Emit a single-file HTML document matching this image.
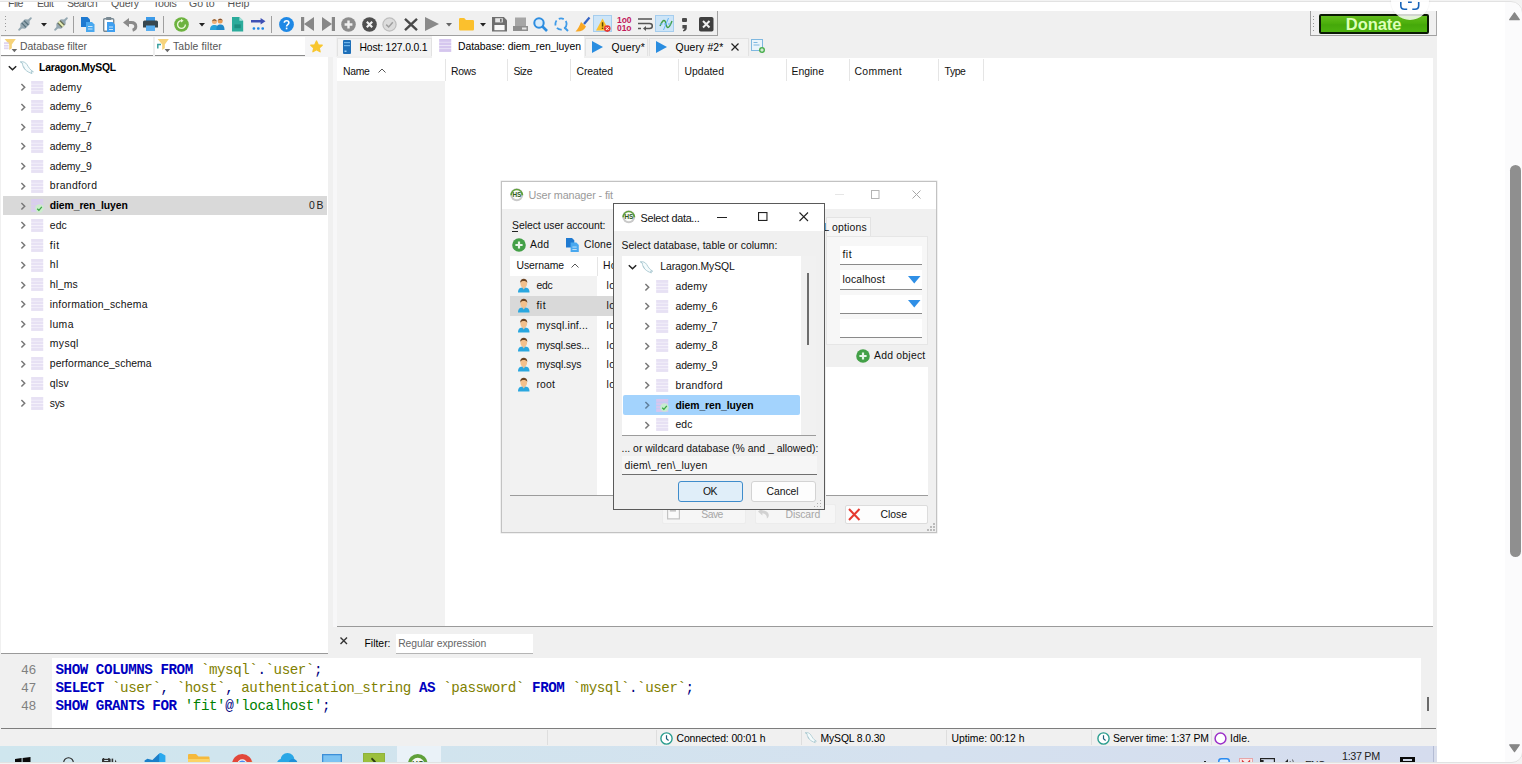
<!DOCTYPE html>
<html lang="en"><head><meta charset="utf-8"><title>HeidiSQL - User manager</title>
<style>
html,body{margin:0;padding:0;}
body{width:1522px;height:764px;overflow:hidden;background:#fff;position:relative;font-family:"Liberation Sans",sans-serif;font-size:11px;color:#000;}
.r{position:absolute;box-sizing:border-box;}
.t{position:absolute;white-space:pre;}
svg{overflow:visible;}
</style></head><body>
<div class="r " style="left:0.00px;top:0.00px;width:1436.50px;height:764.00px;background:#f0f0f0;"></div>
<div class="r " style="left:0.00px;top:0.00px;width:1436.50px;height:11.00px;background:#fff;"></div>
<div class="r" style="left:0;top:0;width:1436.5px;height:12.5px;overflow:hidden">
<span class="t" style="left:8.00px;top:-4.80px;font-size:10.6px;line-height:16px;letter-spacing:-0.520px;color:#555;">File</span>
<span class="t" style="left:37.00px;top:-4.80px;font-size:10.6px;line-height:16px;letter-spacing:-0.441px;color:#555;">Edit</span>
<span class="t" style="left:67.00px;top:-4.80px;font-size:10.6px;line-height:16px;letter-spacing:-0.598px;color:#555;">Search</span>
<span class="t" style="left:111.00px;top:-4.80px;font-size:10.6px;line-height:16px;letter-spacing:-0.173px;color:#555;">Query</span>
<span class="t" style="left:153.00px;top:-4.80px;font-size:10.6px;line-height:16px;letter-spacing:-0.249px;color:#555;">Tools</span>
<span class="t" style="left:189.00px;top:-4.80px;font-size:10.6px;line-height:16px;letter-spacing:-0.085px;color:#555;">Go to</span>
<span class="t" style="left:227.50px;top:-4.80px;font-size:10.6px;line-height:16px;letter-spacing:0.050px;color:#555;">Help</span>
</div>
<div class="r " style="left:1.00px;top:11.00px;width:716.50px;height:24.50px;background:#f0f0f0;border-right:1px solid #a0a0a0;border-bottom:1px solid #a0a0a0;"></div>
<div class="r " style="left:4.50px;top:15.50px;width:1.20px;height:1.20px;background:#9a9a9a;"></div>
<div class="r " style="left:4.50px;top:19.10px;width:1.20px;height:1.20px;background:#9a9a9a;"></div>
<div class="r " style="left:4.50px;top:22.70px;width:1.20px;height:1.20px;background:#9a9a9a;"></div>
<div class="r " style="left:4.50px;top:26.30px;width:1.20px;height:1.20px;background:#9a9a9a;"></div>
<div class="r " style="left:4.50px;top:29.90px;width:1.20px;height:1.20px;background:#9a9a9a;"></div>
<div class="r " style="left:1310.00px;top:11.00px;width:127.00px;height:24.80px;background:#f0f0f0;border-left:1px solid #a0a0a0;border-bottom:1px solid #a0a0a0;border-right:1px solid #a8a8a8;"></div>
<div class="r " style="left:1313.00px;top:15.50px;width:1.20px;height:1.20px;background:#9a9a9a;"></div>
<div class="r " style="left:1313.00px;top:19.10px;width:1.20px;height:1.20px;background:#9a9a9a;"></div>
<div class="r " style="left:1313.00px;top:22.70px;width:1.20px;height:1.20px;background:#9a9a9a;"></div>
<div class="r " style="left:1313.00px;top:26.30px;width:1.20px;height:1.20px;background:#9a9a9a;"></div>
<div class="r " style="left:1313.00px;top:29.90px;width:1.20px;height:1.20px;background:#9a9a9a;"></div>
<div class="r " style="left:1319.30px;top:13.80px;width:110.00px;height:20.70px;background:linear-gradient(#63bd1e 0%,#4caf0c 45%,#45a80a 55%,#4db30e 100%);border:2px solid #0a1a04;border-radius:2px;"></div>
<span class="t" style="left:1345.80px;top:15.20px;font-size:16.5px;line-height:18px;letter-spacing:-0.070px;font-weight:700;color:#dcffb8;">Donate</span>
<div class="r " style="left:1.00px;top:37.00px;width:152.00px;height:18.50px;background:#fff;border-bottom:1px solid #8a8a8a;"></div>
<div class="r " style="left:154.50px;top:37.00px;width:150.30px;height:18.50px;background:#fff;border-bottom:1px solid #8a8a8a;"></div>
<span class="t" style="left:20.00px;top:38.70px;font-size:10.4px;line-height:16px;letter-spacing:-0.004px;color:#555;">Database filter</span>
<span class="t" style="left:173.00px;top:38.70px;font-size:10.4px;line-height:16px;letter-spacing:0.133px;color:#555;">Table filter</span>
<div class="r " style="left:1.00px;top:56.50px;width:326.50px;height:597.00px;background:#fff;border-bottom:1px solid #9a9a9a;"></div>
<div class="r " style="left:332.50px;top:57.00px;width:4.50px;height:570.00px;background:#f7f7f8;"></div>
<svg class="r" style="left:8.00px;top:64.55px;" width="9" height="6" viewBox="0 0 9 6"><path d="M0.8 1.2 L4.5 4.8 L8.2 1.2" fill="none" stroke="#222" stroke-width="1.5"/></svg>
<svg class="r" style="left:20.40px;top:60.95px;" width="14" height="13" viewBox="0 0 14 13"><path d="M0.4 0.9 C3.2 0.2 5.6 1.4 7 3.6 C8.6 6.2 9.6 8.6 13.4 10.8 L11.2 10.6 L12 12.6 C9 11.4 7.2 10.6 5.2 8.6 C3.4 6.8 2.6 4.4 2.4 2.2 Z M2.4 2.2 L0.4 0.9 M3.6 5.4 C4 7 4.6 7.8 5.2 8.6" fill="#f4fbfc" stroke="#a6c6cf" stroke-width="0.9" stroke-linejoin="round"/></svg>
<span class="t" style="left:39.00px;top:59.95px;font-size:10.4px;line-height:16px;letter-spacing:-0.211px;font-weight:700;">Laragon.MySQL</span>
<svg class="r" style="left:20.00px;top:83.06px;" width="6" height="8.5" viewBox="0 0 6 8.5"><path d="M1.4 1 L4.7 4.25 L1.4 7.5" fill="none" stroke="#787878" stroke-width="1.5"/></svg>
<svg class="r" style="left:31.00px;top:80.71px;opacity:1;" width="12.4" height="13.4" viewBox="0 0 13 14.4"><rect x="0" y="0" width="13" height="3.1" fill="#e7e1f4"/><rect x="0" y="3.6" width="13" height="3.1" fill="#e7e1f4"/><rect x="0" y="7.2" width="13" height="3.1" fill="#e7e1f4"/><rect x="0" y="10.8" width="13" height="3.1" fill="#e7e1f4"/></svg>
<span class="t" style="left:49.80px;top:79.51px;font-size:10.4px;line-height:16px;letter-spacing:0.157px;color:#111;">ademy</span>
<svg class="r" style="left:20.00px;top:102.82px;" width="6" height="8.5" viewBox="0 0 6 8.5"><path d="M1.4 1 L4.7 4.25 L1.4 7.5" fill="none" stroke="#787878" stroke-width="1.5"/></svg>
<svg class="r" style="left:31.00px;top:100.47px;opacity:1;" width="12.4" height="13.4" viewBox="0 0 13 14.4"><rect x="0" y="0" width="13" height="3.1" fill="#e7e1f4"/><rect x="0" y="3.6" width="13" height="3.1" fill="#e7e1f4"/><rect x="0" y="7.2" width="13" height="3.1" fill="#e7e1f4"/><rect x="0" y="10.8" width="13" height="3.1" fill="#e7e1f4"/></svg>
<span class="t" style="left:49.80px;top:99.27px;font-size:10.4px;line-height:16px;letter-spacing:-0.112px;color:#111;">ademy_6</span>
<svg class="r" style="left:20.00px;top:122.58px;" width="6" height="8.5" viewBox="0 0 6 8.5"><path d="M1.4 1 L4.7 4.25 L1.4 7.5" fill="none" stroke="#787878" stroke-width="1.5"/></svg>
<svg class="r" style="left:31.00px;top:120.23px;opacity:1;" width="12.4" height="13.4" viewBox="0 0 13 14.4"><rect x="0" y="0" width="13" height="3.1" fill="#e7e1f4"/><rect x="0" y="3.6" width="13" height="3.1" fill="#e7e1f4"/><rect x="0" y="7.2" width="13" height="3.1" fill="#e7e1f4"/><rect x="0" y="10.8" width="13" height="3.1" fill="#e7e1f4"/></svg>
<span class="t" style="left:49.80px;top:119.03px;font-size:10.4px;line-height:16px;letter-spacing:-0.112px;color:#111;">ademy_7</span>
<svg class="r" style="left:20.00px;top:142.34px;" width="6" height="8.5" viewBox="0 0 6 8.5"><path d="M1.4 1 L4.7 4.25 L1.4 7.5" fill="none" stroke="#787878" stroke-width="1.5"/></svg>
<svg class="r" style="left:31.00px;top:139.99px;opacity:1;" width="12.4" height="13.4" viewBox="0 0 13 14.4"><rect x="0" y="0" width="13" height="3.1" fill="#e7e1f4"/><rect x="0" y="3.6" width="13" height="3.1" fill="#e7e1f4"/><rect x="0" y="7.2" width="13" height="3.1" fill="#e7e1f4"/><rect x="0" y="10.8" width="13" height="3.1" fill="#e7e1f4"/></svg>
<span class="t" style="left:49.80px;top:138.79px;font-size:10.4px;line-height:16px;letter-spacing:-0.112px;color:#111;">ademy_8</span>
<svg class="r" style="left:20.00px;top:162.10px;" width="6" height="8.5" viewBox="0 0 6 8.5"><path d="M1.4 1 L4.7 4.25 L1.4 7.5" fill="none" stroke="#787878" stroke-width="1.5"/></svg>
<svg class="r" style="left:31.00px;top:159.75px;opacity:1;" width="12.4" height="13.4" viewBox="0 0 13 14.4"><rect x="0" y="0" width="13" height="3.1" fill="#e7e1f4"/><rect x="0" y="3.6" width="13" height="3.1" fill="#e7e1f4"/><rect x="0" y="7.2" width="13" height="3.1" fill="#e7e1f4"/><rect x="0" y="10.8" width="13" height="3.1" fill="#e7e1f4"/></svg>
<span class="t" style="left:49.80px;top:158.55px;font-size:10.4px;line-height:16px;letter-spacing:-0.112px;color:#111;">ademy_9</span>
<svg class="r" style="left:20.00px;top:181.86px;" width="6" height="8.5" viewBox="0 0 6 8.5"><path d="M1.4 1 L4.7 4.25 L1.4 7.5" fill="none" stroke="#787878" stroke-width="1.5"/></svg>
<svg class="r" style="left:31.00px;top:179.51px;opacity:1;" width="12.4" height="13.4" viewBox="0 0 13 14.4"><rect x="0" y="0" width="13" height="3.1" fill="#e7e1f4"/><rect x="0" y="3.6" width="13" height="3.1" fill="#e7e1f4"/><rect x="0" y="7.2" width="13" height="3.1" fill="#e7e1f4"/><rect x="0" y="10.8" width="13" height="3.1" fill="#e7e1f4"/></svg>
<span class="t" style="left:49.80px;top:178.31px;font-size:10.4px;line-height:16px;letter-spacing:0.331px;color:#111;">brandford</span>
<div class="r " style="left:2.50px;top:195.67px;width:324.50px;height:19.60px;background:#d9d9d9;"></div>
<svg class="r" style="left:20.00px;top:201.62px;" width="6" height="8.5" viewBox="0 0 6 8.5"><path d="M1.4 1 L4.7 4.25 L1.4 7.5" fill="none" stroke="#787878" stroke-width="1.5"/></svg>
<svg class="r" style="left:31.00px;top:199.27px;opacity:1;" width="12.4" height="13.4" viewBox="0 0 13 14.4"><rect x="0" y="0" width="13" height="3.1" fill="#d9cdee"/><rect x="0" y="3.6" width="13" height="3.1" fill="#d9cdee"/><rect x="0" y="7.2" width="13" height="3.1" fill="#d9cdee"/><rect x="0" y="10.8" width="13" height="3.1" fill="#d9cdee"/></svg>
<svg class="r" style="left:35.00px;top:203.67px;" width="9" height="9" viewBox="0 0 9 9"><circle cx="4.5" cy="4.5" r="4.2" fill="#cdeccd"/><path d="M2.2 4.7 L3.9 6.3 L6.8 2.9" fill="none" stroke="#3aa845" stroke-width="1.3"/></svg>
<span class="t" style="left:49.80px;top:198.07px;font-size:10.4px;line-height:16px;letter-spacing:-0.085px;font-weight:700;">diem_ren_luyen</span>
<span class="t" style="left:309.00px;top:198.07px;font-size:10.4px;line-height:16px;letter-spacing:-0.537px;color:#222;">0 B</span>
<svg class="r" style="left:20.00px;top:221.38px;" width="6" height="8.5" viewBox="0 0 6 8.5"><path d="M1.4 1 L4.7 4.25 L1.4 7.5" fill="none" stroke="#787878" stroke-width="1.5"/></svg>
<svg class="r" style="left:31.00px;top:219.03px;opacity:1;" width="12.4" height="13.4" viewBox="0 0 13 14.4"><rect x="0" y="0" width="13" height="3.1" fill="#e7e1f4"/><rect x="0" y="3.6" width="13" height="3.1" fill="#e7e1f4"/><rect x="0" y="7.2" width="13" height="3.1" fill="#e7e1f4"/><rect x="0" y="10.8" width="13" height="3.1" fill="#e7e1f4"/></svg>
<span class="t" style="left:49.80px;top:217.83px;font-size:10.4px;line-height:16px;letter-spacing:0.077px;color:#111;">edc</span>
<svg class="r" style="left:20.00px;top:241.14px;" width="6" height="8.5" viewBox="0 0 6 8.5"><path d="M1.4 1 L4.7 4.25 L1.4 7.5" fill="none" stroke="#787878" stroke-width="1.5"/></svg>
<svg class="r" style="left:31.00px;top:238.79px;opacity:1;" width="12.4" height="13.4" viewBox="0 0 13 14.4"><rect x="0" y="0" width="13" height="3.1" fill="#e7e1f4"/><rect x="0" y="3.6" width="13" height="3.1" fill="#e7e1f4"/><rect x="0" y="7.2" width="13" height="3.1" fill="#e7e1f4"/><rect x="0" y="10.8" width="13" height="3.1" fill="#e7e1f4"/></svg>
<span class="t" style="left:49.80px;top:237.59px;font-size:10.4px;line-height:16px;letter-spacing:0.637px;color:#111;">fit</span>
<svg class="r" style="left:20.00px;top:260.90px;" width="6" height="8.5" viewBox="0 0 6 8.5"><path d="M1.4 1 L4.7 4.25 L1.4 7.5" fill="none" stroke="#787878" stroke-width="1.5"/></svg>
<svg class="r" style="left:31.00px;top:258.55px;opacity:1;" width="12.4" height="13.4" viewBox="0 0 13 14.4"><rect x="0" y="0" width="13" height="3.1" fill="#e7e1f4"/><rect x="0" y="3.6" width="13" height="3.1" fill="#e7e1f4"/><rect x="0" y="7.2" width="13" height="3.1" fill="#e7e1f4"/><rect x="0" y="10.8" width="13" height="3.1" fill="#e7e1f4"/></svg>
<span class="t" style="left:49.80px;top:257.35px;font-size:10.4px;line-height:16px;letter-spacing:0.453px;color:#111;">hl</span>
<svg class="r" style="left:20.00px;top:280.66px;" width="6" height="8.5" viewBox="0 0 6 8.5"><path d="M1.4 1 L4.7 4.25 L1.4 7.5" fill="none" stroke="#787878" stroke-width="1.5"/></svg>
<svg class="r" style="left:31.00px;top:278.31px;opacity:1;" width="12.4" height="13.4" viewBox="0 0 13 14.4"><rect x="0" y="0" width="13" height="3.1" fill="#e7e1f4"/><rect x="0" y="3.6" width="13" height="3.1" fill="#e7e1f4"/><rect x="0" y="7.2" width="13" height="3.1" fill="#e7e1f4"/><rect x="0" y="10.8" width="13" height="3.1" fill="#e7e1f4"/></svg>
<span class="t" style="left:49.80px;top:277.11px;font-size:10.4px;line-height:16px;letter-spacing:0.052px;color:#111;">hl_ms</span>
<svg class="r" style="left:20.00px;top:300.42px;" width="6" height="8.5" viewBox="0 0 6 8.5"><path d="M1.4 1 L4.7 4.25 L1.4 7.5" fill="none" stroke="#787878" stroke-width="1.5"/></svg>
<svg class="r" style="left:31.00px;top:298.07px;opacity:1;" width="12.4" height="13.4" viewBox="0 0 13 14.4"><rect x="0" y="0" width="13" height="3.1" fill="#e7e1f4"/><rect x="0" y="3.6" width="13" height="3.1" fill="#e7e1f4"/><rect x="0" y="7.2" width="13" height="3.1" fill="#e7e1f4"/><rect x="0" y="10.8" width="13" height="3.1" fill="#e7e1f4"/></svg>
<span class="t" style="left:49.80px;top:296.87px;font-size:10.4px;line-height:16px;letter-spacing:0.242px;color:#111;">information_schema</span>
<svg class="r" style="left:20.00px;top:320.18px;" width="6" height="8.5" viewBox="0 0 6 8.5"><path d="M1.4 1 L4.7 4.25 L1.4 7.5" fill="none" stroke="#787878" stroke-width="1.5"/></svg>
<svg class="r" style="left:31.00px;top:317.83px;opacity:1;" width="12.4" height="13.4" viewBox="0 0 13 14.4"><rect x="0" y="0" width="13" height="3.1" fill="#e7e1f4"/><rect x="0" y="3.6" width="13" height="3.1" fill="#e7e1f4"/><rect x="0" y="7.2" width="13" height="3.1" fill="#e7e1f4"/><rect x="0" y="10.8" width="13" height="3.1" fill="#e7e1f4"/></svg>
<span class="t" style="left:49.80px;top:316.63px;font-size:10.4px;line-height:16px;letter-spacing:0.364px;color:#111;">luma</span>
<svg class="r" style="left:20.00px;top:339.94px;" width="6" height="8.5" viewBox="0 0 6 8.5"><path d="M1.4 1 L4.7 4.25 L1.4 7.5" fill="none" stroke="#787878" stroke-width="1.5"/></svg>
<svg class="r" style="left:31.00px;top:337.59px;opacity:1;" width="12.4" height="13.4" viewBox="0 0 13 14.4"><rect x="0" y="0" width="13" height="3.1" fill="#e7e1f4"/><rect x="0" y="3.6" width="13" height="3.1" fill="#e7e1f4"/><rect x="0" y="7.2" width="13" height="3.1" fill="#e7e1f4"/><rect x="0" y="10.8" width="13" height="3.1" fill="#e7e1f4"/></svg>
<span class="t" style="left:49.80px;top:336.39px;font-size:10.4px;line-height:16px;letter-spacing:0.368px;color:#111;">mysql</span>
<svg class="r" style="left:20.00px;top:359.70px;" width="6" height="8.5" viewBox="0 0 6 8.5"><path d="M1.4 1 L4.7 4.25 L1.4 7.5" fill="none" stroke="#787878" stroke-width="1.5"/></svg>
<svg class="r" style="left:31.00px;top:357.35px;opacity:1;" width="12.4" height="13.4" viewBox="0 0 13 14.4"><rect x="0" y="0" width="13" height="3.1" fill="#e7e1f4"/><rect x="0" y="3.6" width="13" height="3.1" fill="#e7e1f4"/><rect x="0" y="7.2" width="13" height="3.1" fill="#e7e1f4"/><rect x="0" y="10.8" width="13" height="3.1" fill="#e7e1f4"/></svg>
<span class="t" style="left:49.80px;top:356.15px;font-size:10.4px;line-height:16px;letter-spacing:0.079px;color:#111;">performance_schema</span>
<svg class="r" style="left:20.00px;top:379.46px;" width="6" height="8.5" viewBox="0 0 6 8.5"><path d="M1.4 1 L4.7 4.25 L1.4 7.5" fill="none" stroke="#787878" stroke-width="1.5"/></svg>
<svg class="r" style="left:31.00px;top:377.11px;opacity:1;" width="12.4" height="13.4" viewBox="0 0 13 14.4"><rect x="0" y="0" width="13" height="3.1" fill="#e7e1f4"/><rect x="0" y="3.6" width="13" height="3.1" fill="#e7e1f4"/><rect x="0" y="7.2" width="13" height="3.1" fill="#e7e1f4"/><rect x="0" y="10.8" width="13" height="3.1" fill="#e7e1f4"/></svg>
<span class="t" style="left:49.80px;top:375.91px;font-size:10.4px;line-height:16px;letter-spacing:0.126px;color:#111;">qlsv</span>
<svg class="r" style="left:20.00px;top:399.22px;" width="6" height="8.5" viewBox="0 0 6 8.5"><path d="M1.4 1 L4.7 4.25 L1.4 7.5" fill="none" stroke="#787878" stroke-width="1.5"/></svg>
<svg class="r" style="left:31.00px;top:396.87px;opacity:1;" width="12.4" height="13.4" viewBox="0 0 13 14.4"><rect x="0" y="0" width="13" height="3.1" fill="#e7e1f4"/><rect x="0" y="3.6" width="13" height="3.1" fill="#e7e1f4"/><rect x="0" y="7.2" width="13" height="3.1" fill="#e7e1f4"/><rect x="0" y="10.8" width="13" height="3.1" fill="#e7e1f4"/></svg>
<span class="t" style="left:49.80px;top:395.67px;font-size:10.4px;line-height:16px;letter-spacing:-0.367px;color:#111;">sys</span>
<div class="r " style="left:305.00px;top:36.50px;width:31.00px;height:20.00px;background:#f5f5f6;"></div>
<svg class="r" style="left:309.60px;top:40.00px;" width="13" height="12.5" viewBox="0 0 13 12.5"><path d="M6.5 1 L8.2 4.8 L12.2 5.2 L9.2 7.9 L10.1 11.8 L6.5 9.8 L2.9 11.8 L3.8 7.9 L0.8 5.2 L4.8 4.8 Z" fill="#f8c62e" stroke="#f8c62e" stroke-width="1.3" stroke-linejoin="round"/></svg>
<div class="r " style="left:336.50px;top:37.50px;width:95.00px;height:18.50px;background:#f3f3f3;border:1px solid #e2e2e2;border-bottom:none;"></div>
<svg class="r" style="left:343.00px;top:39.50px;" width="8" height="14" viewBox="0 0 8 14"><rect x="0" y="0" width="8" height="14" rx="1" fill="#1e6fb8"/><rect x="1" y="2" width="6" height="1.2" fill="#6fb5ea"/><rect x="1" y="5" width="6" height="1.2" fill="#6fb5ea"/><rect x="1.5" y="10.5" width="2" height="1.5" fill="#9fd2f5"/></svg>
<span class="t" style="left:359.50px;top:39.70px;font-size:10.4px;line-height:16px;letter-spacing:-0.169px;">Host: 127.0.0.1</span>
<div class="r " style="left:432.00px;top:36.00px;width:152.00px;height:21.50px;background:#fff;"></div>
<svg class="r" style="left:438.70px;top:39.00px;opacity:1;" width="12.4" height="13.4" viewBox="0 0 13 14.4"><rect x="0" y="0" width="13" height="3.1" fill="#d5c6ee"/><rect x="0" y="3.6" width="13" height="3.1" fill="#d5c6ee"/><rect x="0" y="7.2" width="13" height="3.1" fill="#d5c6ee"/><rect x="0" y="10.8" width="13" height="3.1" fill="#d5c6ee"/></svg>
<span class="t" style="left:458.00px;top:38.70px;font-size:10.4px;line-height:16px;letter-spacing:-0.054px;">Database: diem_ren_luyen</span>
<div class="r " style="left:585.00px;top:37.50px;width:62.50px;height:18.50px;background:#f3f3f3;border:1px solid #e2e2e2;border-bottom:none;"></div>
<svg class="r" style="left:592.00px;top:40.50px;" width="11" height="12" viewBox="0 0 11 12"><path d="M0 0 L11 6 L0 12 Z" fill="#2a8de0"/></svg>
<span class="t" style="left:611.50px;top:39.70px;font-size:10.4px;line-height:16px;letter-spacing:0.189px;">Query*</span>
<div class="r " style="left:648.50px;top:37.50px;width:100.00px;height:18.50px;background:#f3f3f3;border:1px solid #e2e2e2;border-bottom:none;"></div>
<svg class="r" style="left:656.00px;top:40.50px;" width="11" height="12" viewBox="0 0 11 12"><path d="M0 0 L11 6 L0 12 Z" fill="#2a8de0"/></svg>
<span class="t" style="left:675.50px;top:39.70px;font-size:10.4px;line-height:16px;letter-spacing:0.130px;">Query #2*</span>
<svg class="r" style="left:730.50px;top:43.00px;" width="8" height="8" viewBox="0 0 8 8"><path d="M0.5 0.5 L7.5 7.5 M7.5 0.5 L0.5 7.5" stroke="#222" stroke-width="1.2"/></svg>
<svg class="r" style="left:751.00px;top:39.00px;" width="14" height="14" viewBox="0 0 14 14"><rect x="0.5" y="0.5" width="11" height="11" fill="#eaf4fb" stroke="#7fb8e0"/><rect x="2.5" y="3" width="4" height="1" fill="#7fb8e0"/><rect x="2.5" y="5.5" width="6" height="1" fill="#7fb8e0"/><circle cx="11" cy="11" r="3" fill="#4caf50"/><path d="M11 9.3 V12.7 M9.3 11 H12.7" stroke="#fff" stroke-width="1"/></svg>
<div class="r " style="left:337.00px;top:58.30px;width:1095.50px;height:568.50px;background:#fff;border-bottom:1px solid #9a9a9a;"></div>
<div class="r " style="left:337.00px;top:81.00px;width:107.50px;height:544.80px;background:#f2f2f2;"></div>
<span class="t" style="left:343.00px;top:63.50px;font-size:10.4px;line-height:16px;letter-spacing:-0.311px;color:#111;">Name</span>
<span class="t" style="left:451.00px;top:63.50px;font-size:10.4px;line-height:16px;letter-spacing:-0.251px;color:#111;">Rows</span>
<span class="t" style="left:513.50px;top:63.50px;font-size:10.4px;line-height:16px;letter-spacing:-0.433px;color:#111;">Size</span>
<span class="t" style="left:576.50px;top:63.50px;font-size:10.4px;line-height:16px;letter-spacing:-0.071px;color:#111;">Created</span>
<span class="t" style="left:684.50px;top:63.50px;font-size:10.4px;line-height:16px;letter-spacing:0.026px;color:#111;">Updated</span>
<span class="t" style="left:791.50px;top:63.50px;font-size:10.4px;line-height:16px;letter-spacing:0.019px;color:#111;">Engine</span>
<span class="t" style="left:854.50px;top:63.50px;font-size:10.4px;line-height:16px;letter-spacing:0.346px;color:#111;">Comment</span>
<span class="t" style="left:944.50px;top:63.50px;font-size:10.4px;line-height:16px;letter-spacing:-0.387px;color:#111;">Type</span>
<svg class="r" style="left:378.00px;top:67.50px;" width="8" height="5" viewBox="0 0 8 5"><path d="M0.5 4.5 L4 1 L7.5 4.5" fill="none" stroke="#555" stroke-width="1"/></svg>
<div class="r " style="left:444.50px;top:59.00px;width:1.00px;height:22.00px;background:#e5e5e5;"></div>
<div class="r " style="left:507.00px;top:59.00px;width:1.00px;height:22.00px;background:#e5e5e5;"></div>
<div class="r " style="left:570.00px;top:59.00px;width:1.00px;height:22.00px;background:#e5e5e5;"></div>
<div class="r " style="left:678.00px;top:59.00px;width:1.00px;height:22.00px;background:#e5e5e5;"></div>
<div class="r " style="left:785.50px;top:59.00px;width:1.00px;height:22.00px;background:#e5e5e5;"></div>
<div class="r " style="left:848.50px;top:59.00px;width:1.00px;height:22.00px;background:#e5e5e5;"></div>
<div class="r " style="left:938.00px;top:59.00px;width:1.00px;height:22.00px;background:#e5e5e5;"></div>
<div class="r " style="left:983.00px;top:59.00px;width:1.00px;height:22.00px;background:#e5e5e5;"></div>
<svg class="r" style="left:340.40px;top:637.40px;" width="7.5" height="7.5" viewBox="0 0 7.5 7.5"><path d="M0.5 0.5 L7 7 M7 0.5 L0.5 7" stroke="#333" stroke-width="1.4"/></svg>
<span class="t" style="left:364.50px;top:635.70px;font-size:10.4px;line-height:16px;letter-spacing:-0.000px;">Filter:</span>
<div class="r " style="left:396.00px;top:634.00px;width:136.50px;height:19.60px;background:#fff;border-bottom:1px solid #b5b5b5;"></div>
<span class="t" style="left:398.20px;top:636.00px;font-size:10.4px;line-height:16px;letter-spacing:-0.089px;color:#666;">Regular expression</span>
<div class="r " style="left:1.00px;top:657.80px;width:1434.50px;height:71.40px;background:#fff;border-bottom:1.2px solid #7d7d7d;"></div>
<div class="r " style="left:1.00px;top:657.80px;width:51.20px;height:70.20px;background:#f0f0f0;"></div>
<div class="r " style="left:1421.00px;top:657.80px;width:14.50px;height:70.20px;background:#f0f0f0;"></div>
<div class="r " style="left:1427.20px;top:696.80px;width:1.60px;height:14.60px;background:#6a6a6a;"></div>
<span class="t" style="left:21.00px;top:661.80px;font-size:13px;line-height:18px;letter-spacing:-0.201px;color:#808080;font-family:'Liberation Mono',monospace;">46</span>
<span class="t" style="left:55.50px;top:660.90px;font-size:14.2px;line-height:18px;letter-spacing:-0.443px;font-weight:700;color:#0000c0;font-family:'Liberation Mono',monospace;">SHOW COLUMNS FROM</span>
<span class="t" style="left:192.83px;top:660.90px;font-size:14.2px;line-height:18px;letter-spacing:-0.443px;color:#0000c0;font-family:'Liberation Mono',monospace;"> </span>
<span class="t" style="left:200.90px;top:660.90px;font-size:14.2px;line-height:18px;letter-spacing:-0.443px;color:#808000;font-family:'Liberation Mono',monospace;">`mysql`</span>
<span class="t" style="left:257.45px;top:660.90px;font-size:14.2px;line-height:18px;letter-spacing:-0.443px;color:#000080;font-family:'Liberation Mono',monospace;">.</span>
<span class="t" style="left:265.53px;top:660.90px;font-size:14.2px;line-height:18px;letter-spacing:-0.443px;color:#808000;font-family:'Liberation Mono',monospace;">`user`</span>
<span class="t" style="left:314.00px;top:660.90px;font-size:14.2px;line-height:18px;letter-spacing:-0.443px;color:#000080;font-family:'Liberation Mono',monospace;">;</span>
<span class="t" style="left:21.00px;top:679.75px;font-size:13px;line-height:18px;letter-spacing:-0.201px;color:#808080;font-family:'Liberation Mono',monospace;">47</span>
<span class="t" style="left:55.50px;top:678.85px;font-size:14.2px;line-height:18px;letter-spacing:-0.443px;font-weight:700;color:#0000c0;font-family:'Liberation Mono',monospace;">SELECT</span>
<span class="t" style="left:103.97px;top:678.85px;font-size:14.2px;line-height:18px;letter-spacing:-0.443px;color:#0000c0;font-family:'Liberation Mono',monospace;"> </span>
<span class="t" style="left:112.05px;top:678.85px;font-size:14.2px;line-height:18px;letter-spacing:-0.443px;color:#808000;font-family:'Liberation Mono',monospace;">`user`</span>
<span class="t" style="left:160.51px;top:678.85px;font-size:14.2px;line-height:18px;letter-spacing:-0.443px;color:#000080;font-family:'Liberation Mono',monospace;">, </span>
<span class="t" style="left:176.67px;top:678.85px;font-size:14.2px;line-height:18px;letter-spacing:-0.443px;color:#808000;font-family:'Liberation Mono',monospace;">`host`</span>
<span class="t" style="left:225.14px;top:678.85px;font-size:14.2px;line-height:18px;letter-spacing:-0.443px;color:#000080;font-family:'Liberation Mono',monospace;">, </span>
<span class="t" style="left:241.29px;top:678.85px;font-size:14.2px;line-height:18px;letter-spacing:-0.443px;color:#808000;font-family:'Liberation Mono',monospace;">authentication_string</span>
<span class="t" style="left:410.93px;top:678.85px;font-size:14.2px;line-height:18px;letter-spacing:-0.443px;color:#0000c0;font-family:'Liberation Mono',monospace;"> </span>
<span class="t" style="left:419.01px;top:678.85px;font-size:14.2px;line-height:18px;letter-spacing:-0.443px;font-weight:700;color:#0000c0;font-family:'Liberation Mono',monospace;">AS</span>
<span class="t" style="left:435.17px;top:678.85px;font-size:14.2px;line-height:18px;letter-spacing:-0.443px;color:#0000c0;font-family:'Liberation Mono',monospace;"> </span>
<span class="t" style="left:443.24px;top:678.85px;font-size:14.2px;line-height:18px;letter-spacing:-0.443px;color:#808000;font-family:'Liberation Mono',monospace;">`password`</span>
<span class="t" style="left:524.02px;top:678.85px;font-size:14.2px;line-height:18px;letter-spacing:-0.443px;color:#0000c0;font-family:'Liberation Mono',monospace;"> </span>
<span class="t" style="left:532.10px;top:678.85px;font-size:14.2px;line-height:18px;letter-spacing:-0.443px;font-weight:700;color:#0000c0;font-family:'Liberation Mono',monospace;">FROM</span>
<span class="t" style="left:564.41px;top:678.85px;font-size:14.2px;line-height:18px;letter-spacing:-0.443px;color:#0000c0;font-family:'Liberation Mono',monospace;"> </span>
<span class="t" style="left:572.49px;top:678.85px;font-size:14.2px;line-height:18px;letter-spacing:-0.443px;color:#808000;font-family:'Liberation Mono',monospace;">`mysql`</span>
<span class="t" style="left:629.04px;top:678.85px;font-size:14.2px;line-height:18px;letter-spacing:-0.443px;color:#000080;font-family:'Liberation Mono',monospace;">.</span>
<span class="t" style="left:637.12px;top:678.85px;font-size:14.2px;line-height:18px;letter-spacing:-0.443px;color:#808000;font-family:'Liberation Mono',monospace;">`user`</span>
<span class="t" style="left:685.58px;top:678.85px;font-size:14.2px;line-height:18px;letter-spacing:-0.443px;color:#000080;font-family:'Liberation Mono',monospace;">;</span>
<span class="t" style="left:21.00px;top:697.70px;font-size:13px;line-height:18px;letter-spacing:-0.201px;color:#808080;font-family:'Liberation Mono',monospace;">48</span>
<span class="t" style="left:55.50px;top:696.80px;font-size:14.2px;line-height:18px;letter-spacing:-0.443px;font-weight:700;color:#0000c0;font-family:'Liberation Mono',monospace;">SHOW GRANTS FOR</span>
<span class="t" style="left:176.67px;top:696.80px;font-size:14.2px;line-height:18px;letter-spacing:-0.443px;color:#0000c0;font-family:'Liberation Mono',monospace;"> </span>
<span class="t" style="left:184.75px;top:696.80px;font-size:14.2px;line-height:18px;letter-spacing:-0.443px;color:#008000;font-family:'Liberation Mono',monospace;">'fit'</span>
<span class="t" style="left:225.14px;top:696.80px;font-size:14.2px;line-height:18px;letter-spacing:-0.443px;color:#000080;font-family:'Liberation Mono',monospace;">@</span>
<span class="t" style="left:233.22px;top:696.80px;font-size:14.2px;line-height:18px;letter-spacing:-0.443px;color:#008000;font-family:'Liberation Mono',monospace;">'localhost'</span>
<span class="t" style="left:322.07px;top:696.80px;font-size:14.2px;line-height:18px;letter-spacing:-0.443px;color:#000080;font-family:'Liberation Mono',monospace;">;</span>
<div class="r " style="left:0.00px;top:728.50px;width:1436.50px;height:17.50px;background:#f0f0f0;"></div>
<div class="r " style="left:547.00px;top:730.00px;width:1.00px;height:15.00px;background:#dedede;"></div>
<div class="r " style="left:655.50px;top:730.00px;width:1.00px;height:15.00px;background:#dedede;"></div>
<div class="r " style="left:801.00px;top:730.00px;width:1.00px;height:15.00px;background:#dedede;"></div>
<div class="r " style="left:946.00px;top:730.00px;width:1.00px;height:15.00px;background:#dedede;"></div>
<div class="r " style="left:1091.00px;top:730.00px;width:1.00px;height:15.00px;background:#dedede;"></div>
<div class="r " style="left:1210.50px;top:730.00px;width:1.00px;height:15.00px;background:#dedede;"></div>
<svg class="r" style="left:660.00px;top:731.50px;" width="13" height="13" viewBox="0 0 13 13"><circle cx="6.5" cy="6.5" r="5.6" fill="#fff" stroke="#2a9d8f" stroke-width="1.4"/><path d="M6.5 3.2 V6.8 L8.6 8.4" fill="none" stroke="#1d5f7a" stroke-width="1.2"/></svg>
<span class="t" style="left:676.50px;top:731.00px;font-size:10.4px;line-height:16px;letter-spacing:-0.099px;">Connected: 00:01 h</span>
<svg class="r" style="left:805.40px;top:732.39px;" width="11.9" height="11.05" viewBox="0 0 14 13"><path d="M0.4 0.9 C3.2 0.2 5.6 1.4 7 3.6 C8.6 6.2 9.6 8.6 13.4 10.8 L11.2 10.6 L12 12.6 C9 11.4 7.2 10.6 5.2 8.6 C3.4 6.8 2.6 4.4 2.4 2.2 Z M2.4 2.2 L0.4 0.9 M3.6 5.4 C4 7 4.6 7.8 5.2 8.6" fill="#f4fbfc" stroke="#a6c6cf" stroke-width="0.9" stroke-linejoin="round"/></svg>
<span class="t" style="left:820.50px;top:731.00px;font-size:10.4px;line-height:16px;letter-spacing:-0.133px;">MySQL 8.0.30</span>
<span class="t" style="left:951.50px;top:731.00px;font-size:10.4px;line-height:16px;letter-spacing:-0.028px;">Uptime: 00:12 h</span>
<svg class="r" style="left:1097.00px;top:731.50px;" width="13" height="13" viewBox="0 0 13 13"><circle cx="6.5" cy="6.5" r="5.6" fill="#fff" stroke="#2a9d8f" stroke-width="1.4"/><path d="M6.5 3.2 V6.8 L8.6 8.4" fill="none" stroke="#1d5f7a" stroke-width="1.2"/></svg>
<span class="t" style="left:1113.00px;top:731.00px;font-size:10.4px;line-height:16px;letter-spacing:-0.084px;">Server time: 1:37 PM</span>
<svg class="r" style="left:1214.00px;top:731.50px;" width="13" height="13" viewBox="0 0 13 13"><circle cx="6.5" cy="6.5" r="5.4" fill="#fff" stroke="#9b30c9" stroke-width="1.5"/></svg>
<span class="t" style="left:1230.00px;top:731.00px;font-size:10.4px;line-height:16px;letter-spacing:0.069px;">Idle.</span>
<div class="r " style="left:0.00px;top:746.00px;width:1433.00px;height:17.00px;background:linear-gradient(90deg,#cfe6ee 0%,#d1e4ee 30%,#d5e1ef 65%,#d5dcee 100%);"></div>
<div class="r " style="left:1433.00px;top:746.00px;width:1.00px;height:17.00px;background:#b4bcd4;"></div>
<div class="r " style="left:1434.00px;top:746.00px;width:2.50px;height:17.00px;background:#d9deec;"></div>
<div class="r " style="left:1436.50px;top:0.00px;width:85.50px;height:764.00px;background:#fff;"></div>
<div class="r " style="left:1505.00px;top:0.00px;width:17.00px;height:764.00px;background:#fbfbfc;"></div>
<div class="r " style="left:1509.50px;top:165.00px;width:11.00px;height:392.00px;background:#8f8f8f;border-radius:5.5px;"></div>
<svg class="r" style="left:1509.00px;top:12.20px;" width="11" height="8.5" viewBox="0 0 11 8.5"><path d="M5.5 0.8 L10.3 7.7 H0.7 Z" fill="#878787" stroke="#878787" stroke-width="1.2" stroke-linejoin="round"/></svg>
<svg class="r" style="left:1509.00px;top:744.00px;" width="11" height="8.5" viewBox="0 0 11 8.5"><path d="M5.5 7.7 L10.3 0.8 H0.7 Z" fill="#878787" stroke="#878787" stroke-width="1.2" stroke-linejoin="round"/></svg>
<svg class="r" style="left:17.80px;top:17.10px;" width="14" height="14" viewBox="0 0 14 14"><g transform="rotate(-45 7 7)"><path d="M-2.3 7 L-1.8 6.1 L1.6 5.9 L3.8 3.6 H10.2 L12.4 5.9 L15.8 6.1 L16.3 7 L15.8 7.9 L12.4 8.1 L10.2 10.4 H3.8 L1.6 8.1 L-1.8 7.9 Z" fill="#94a7b1"/><rect x="4.8" y="3.9" width="1.2" height="6.2" fill="#546e7a"/><rect x="8.1" y="3.9" width="1.2" height="6.2" fill="#546e7a"/></g></svg>
<svg class="r" style="left:40.50px;top:22.90px;" width="6" height="3.4" viewBox="0 0 6 3.4"><path d="M0 0 H6 L3 3.4 Z" fill="#222"/></svg>
<svg class="r" style="left:54.00px;top:17.10px;" width="14" height="14" viewBox="0 0 14 14"><g transform="rotate(-45 7 7)"><path d="M-2.3 7 L-1.8 6.1 L1.6 5.9 L3.8 3.6 H10.2 L12.4 5.9 L15.8 6.1 L16.3 7 L15.8 7.9 L12.4 8.1 L10.2 10.4 H3.8 L1.6 8.1 L-1.8 7.9 Z" fill="#94a7b1"/><rect x="6.1" y="3.6" width="1.9" height="6.8" fill="#eef3b0"/><rect x="4.8" y="3.9" width="1.2" height="6.2" fill="#6b6f52"/><rect x="8.1" y="3.9" width="1.2" height="6.2" fill="#6b6f52"/></g></svg>
<div class="r " style="left:72.80px;top:15.50px;width:1.00px;height:17.00px;background:#9f9f9f;"></div>
<svg class="r" style="left:81.00px;top:16.60px;" width="14" height="15" viewBox="0 0 14 15"><path d="M0 0 H6.5 L9 2.5 V10 H0 Z" fill="#1f7ad1"/><path d="M5 5 H11 L13.5 7.5 V15 H5 Z" fill="#49a8ef"/><rect x="7" y="9" width="4.5" height="1" fill="#c8e6fb"/><rect x="7" y="11.5" width="4.5" height="1" fill="#c8e6fb"/></svg>
<svg class="r" style="left:103.00px;top:16.60px;" width="12" height="15" viewBox="0 0 12 15"><rect x="0.7" y="1.7" width="10" height="12.6" rx="1" fill="#fff" stroke="#7a8a94" stroke-width="1.4"/><rect x="3.2" y="0" width="5" height="3" fill="#7a8a94"/><path d="M4 5 H9.5 L12 7.5 V15 H4 Z" fill="#3f9ff0"/><rect x="6" y="9.5" width="4" height="1" fill="#c8e6fb"/><rect x="6" y="12" width="4" height="1" fill="#c8e6fb"/></svg>
<svg class="r" style="left:123.00px;top:17.60px;" width="14.5" height="13" viewBox="0 0 14.5 13"><path d="M0 4.6 L6 0 V9.2 Z" fill="#8a8a8a"/><path d="M5 4.6 H8.2 Q12.8 4.6 12.8 8.6 Q12.8 11.4 9.6 12.2" fill="none" stroke="#8a8a8a" stroke-width="3"/></svg>
<svg class="r" style="left:143.00px;top:17.10px;" width="15" height="14" viewBox="0 0 15 14"><rect x="3" y="0" width="9" height="4" fill="#3d9be9"/><path d="M1.5 3.5 H13.5 Q15 3.5 15 5 V10.5 H0 V5 Q0 3.5 1.5 3.5 Z" fill="#37474f"/><rect x="3" y="8.5" width="9" height="5.5" fill="#58aef0"/></svg>
<div class="r " style="left:162.60px;top:15.50px;width:1.00px;height:17.00px;background:#9f9f9f;"></div>
<svg class="r" style="left:174.00px;top:16.60px;" width="15" height="15" viewBox="0 0 15 15"><circle cx="7.5" cy="7.5" r="7.3" fill="#6db33f"/><path d="M7.5 3.6 A3.9 3.9 0 1 0 11.4 7.5" fill="none" stroke="#e9f7d8" stroke-width="1.4"/><path d="M7 1.8 L9.6 3.8 L7 5.6 Z" fill="#e9f7d8"/></svg>
<svg class="r" style="left:198.50px;top:22.90px;" width="6" height="3.4" viewBox="0 0 6 3.4"><path d="M0 0 H6 L3 3.4 Z" fill="#222"/></svg>
<svg class="r" style="left:210.30px;top:18.10px;" width="14.5" height="12" viewBox="0 0 14.5 12"><circle cx="4.4" cy="3.6" r="2.5" fill="#f0b27a"/><path d="M1.9 3.2 Q4.4 -0.6 6.9 3.2 Q4.4 1.6 1.9 3.2 Z" fill="#6d4c2f"/><path d="M0 12 C0 8 2 7 4.4 7 C6.8 7 8.6 8 8.6 12 Z" fill="#29a3d9"/><circle cx="10.2" cy="3" r="2.5" fill="#e59a55"/><path d="M7.7 2.6 Q10.2 -1.2 12.7 2.6 Q10.2 1 7.7 2.6 Z" fill="#5d4037"/><path d="M6.4 12 C6.4 7.4 8 6.4 10.2 6.4 C12.6 6.4 14.5 7.4 14.5 12 Z" fill="#1e88c8"/></svg>
<svg class="r" style="left:232.30px;top:16.90px;" width="11.2" height="14.4" viewBox="0 0 11.2 14.4"><path d="M0 0 H7.4 L11.2 3.8 V14.4 H0 Z" fill="#2bab9b"/><path d="M7.4 0 V3.8 H11.2 Z" fill="#a5e3da"/><rect x="2.4" y="7.4" width="6.4" height="3.8" fill="#1e8e80"/></svg>
<svg class="r" style="left:251.00px;top:17.90px;" width="14.5" height="12.5" viewBox="0 0 14.5 12.5"><path d="M0 1.9 H9.6 V0 L14.5 3.2 L9.6 6.4 V4.5 H0 Z" fill="#3f51b5"/><rect x="1.6" y="9.2" width="2.6" height="2.6" rx="1" fill="#1e88e5"/><rect x="6" y="9.2" width="2.6" height="2.6" rx="1" fill="#1e88e5"/><rect x="10.4" y="9.2" width="2.6" height="2.6" rx="1" fill="#1e88e5"/></svg>
<div class="r " style="left:271.00px;top:15.50px;width:1.00px;height:17.00px;background:#9f9f9f;"></div>
<svg class="r" style="left:279.00px;top:16.60px;" width="15" height="15" viewBox="0 0 15 15"><circle cx="7.5" cy="7.5" r="7.4" fill="#1e88e5"/><path d="M5.3 5.8 C5.3 3 9.9 3 9.9 5.8 C9.9 7.6 7.6 7.6 7.6 9.4" fill="none" stroke="#fff" stroke-width="1.6"/><rect x="6.8" y="10.6" width="1.6" height="1.7" fill="#fff"/></svg>
<svg class="r" style="left:301.00px;top:17.10px;" width="13" height="14" viewBox="0 0 13 14"><rect x="0" y="0" width="3.2" height="14" fill="#878787"/><path d="M13 0 V14 L3 7 Z" fill="#878787"/></svg>
<svg class="r" style="left:321.50px;top:17.10px;" width="13" height="14" viewBox="0 0 13 14"><rect x="9.8" y="0" width="3.2" height="14" fill="#878787"/><path d="M0 0 V14 L10 7 Z" fill="#878787"/></svg>
<svg class="r" style="left:341.00px;top:16.60px;" width="15" height="15" viewBox="0 0 15 15"><circle cx="7.5" cy="7.5" r="7.3" fill="#8c8c8c"/><path d="M7.5 3.6 V11.4 M3.6 7.5 H11.4" stroke="#f0f0f0" stroke-width="2.4"/></svg>
<svg class="r" style="left:362.00px;top:16.60px;" width="15" height="15" viewBox="0 0 15 15"><circle cx="7.5" cy="7.5" r="7.3" fill="#4f4f4f"/><path d="M4.8 4.8 L10.2 10.2 M10.2 4.8 L4.8 10.2" stroke="#f0f0f0" stroke-width="2.2"/></svg>
<svg class="r" style="left:382.00px;top:16.60px;" width="15" height="15" viewBox="0 0 15 15"><circle cx="7.5" cy="7.5" r="6.6" fill="#dcdcdc" stroke="#bdbdbd" stroke-width="1.2"/><path d="M4.2 7.6 L6.7 10 L10.8 5.2" fill="none" stroke="#9f9f9f" stroke-width="1.5"/></svg>
<svg class="r" style="left:403.50px;top:17.60px;" width="14" height="13" viewBox="0 0 14 13"><path d="M1 0.8 L13 12.2 M13 0.8 L1 12.2" stroke="#4a4a4a" stroke-width="2.4"/></svg>
<svg class="r" style="left:424.50px;top:17.10px;" width="14" height="14" viewBox="0 0 14 14"><path d="M0 0 L14 7 L0 14 Z" fill="#8a8a8a"/></svg>
<svg class="r" style="left:446.00px;top:22.90px;" width="6" height="3.4" viewBox="0 0 6 3.4"><path d="M0 0 H6 L3 3.4 Z" fill="#666"/></svg>
<svg class="r" style="left:459.00px;top:18.10px;" width="15" height="12.5" viewBox="0 0 15 12.5"><path d="M0 1.2 Q0 0 1.2 0 H5.2 L7 2 H13.8 Q15 2 15 3.2 V11.3 Q15 12.5 13.8 12.5 H1.2 Q0 12.5 0 11.3 Z" fill="#fbc02d"/></svg>
<svg class="r" style="left:479.50px;top:22.90px;" width="6" height="3.4" viewBox="0 0 6 3.4"><path d="M0 0 H6 L3 3.4 Z" fill="#222"/></svg>
<svg class="r" style="left:491.50px;top:17.10px;" width="15" height="14.5" viewBox="0 0 15 14.5"><path d="M0 0 H11.8 L15 3.2 V14.5 H0 Z" fill="#6f6f6f"/><rect x="3.2" y="1.2" width="7.6" height="4.2" fill="#e6e6e6"/><rect x="8" y="1.8" width="1.7" height="3" fill="#6f6f6f"/><rect x="2.4" y="8" width="10.2" height="5.2" fill="#fafafa"/></svg>
<svg class="r" style="left:512.50px;top:17.10px;" width="15" height="14.5" viewBox="0 0 15 14.5"><rect x="2" y="0.5" width="11" height="8.5" fill="#a6a6a6"/><rect x="0" y="9" width="15" height="5" fill="#8e8e8e"/><rect x="9" y="10.5" width="4.5" height="2" fill="#e4e4e4"/></svg>
<svg class="r" style="left:533.00px;top:17.10px;" width="15" height="15" viewBox="0 0 15 15"><circle cx="6" cy="6" r="4.7" fill="#d9ecfb" stroke="#2d8de0" stroke-width="2"/><path d="M9.5 9.5 L14 14" stroke="#2d8de0" stroke-width="2.6"/></svg>
<svg class="r" style="left:554.00px;top:16.60px;" width="15" height="15" viewBox="0 0 15 15"><circle cx="7" cy="7" r="5.6" fill="none" stroke="#3f9be8" stroke-width="1.8" stroke-dasharray="5.2 2.6"/><path d="M10.5 10.5 L14 14" stroke="#3f9be8" stroke-width="2"/></svg>
<svg class="r" style="left:575.00px;top:16.60px;" width="15" height="15" viewBox="0 0 15 15"><path d="M14.5 0.5 L9 7" stroke="#3565c4" stroke-width="2.2"/><path d="M6 5 L11 9.5 C9.5 13 6 15 0.5 14.5 C3 12 4.5 9 6 5 Z" fill="#f9a825"/></svg>
<div class="r " style="left:592.70px;top:14.60px;width:19.80px;height:17.80px;background:#cde5f8;border:1px solid #a5cdee;"></div>
<svg class="r" style="left:596.00px;top:17.60px;" width="15" height="14" viewBox="0 0 15 14"><path d="M6.5 0.5 L13 12.5 H0 Z" fill="#fbc02d"/><rect x="5.8" y="4.3" width="1.5" height="4.3" fill="#5a4500"/><rect x="5.8" y="9.6" width="1.5" height="1.4" fill="#5a4500"/><circle cx="11.3" cy="10.6" r="3.3" fill="#e53935"/><path d="M9.9 9.2 L12.7 12 M12.7 9.2 L9.9 12" stroke="#fff" stroke-width="1"/></svg>
<span class="t" style="left:617.00px;top:16.20px;font-size:8.5px;line-height:9px;letter-spacing:-0.049px;font-weight:700;color:#c2185b;">1o0</span>
<span class="t" style="left:617.00px;top:23.70px;font-size:8.5px;line-height:9px;letter-spacing:-0.049px;font-weight:700;color:#c2185b;">01o</span>
<svg class="r" style="left:637.50px;top:18.10px;" width="15" height="12" viewBox="0 0 15 12"><path d="M0 1 H14" stroke="#555" stroke-width="1.5" fill="none"/><path d="M0 5.5 H11.5 Q14.3 5.5 14.3 8 Q14.3 10.5 11.5 10.5 H7" stroke="#555" stroke-width="1.5" fill="none"/><path d="M8 8 L5 10.5 L8 13 Z" fill="#555"/><path d="M0 10.5 H3" stroke="#555" stroke-width="1.5"/></svg>
<div class="r " style="left:654.70px;top:14.60px;width:19.80px;height:17.80px;background:#cde5f8;border:1px solid #a5cdee;"></div>
<svg class="r" style="left:658.50px;top:17.10px;" width="14" height="14" viewBox="0 0 14 14"><path d="M1 9 C4 2 6 2 7 7 C8 12 10 12 13 4" fill="none" stroke="#43a047" stroke-width="1.4"/><path d="M1 7 H13" stroke="#64b5f6" stroke-width="1.2" stroke-dasharray="2.5 1.5"/><path d="M9.5 1 L4.5 13" stroke="#64b5f6" stroke-width="1"/></svg>
<div class="r " style="left:682.20px;top:17.60px;width:4.40px;height:4.40px;background:#4a4a4a;border-radius:1px;"></div>
<svg class="r" style="left:681.80px;top:24.60px;" width="5" height="6.4" viewBox="0 0 5 6.4"><path d="M0.4 0 H4.8 V3 Q4.8 5.6 1.4 6.4 L0.9 5.2 Q2.5 4.6 2.5 3.6 H0.4 Z" fill="#4a4a4a"/></svg>
<svg class="r" style="left:699.00px;top:17.10px;" width="14.5" height="14.5" viewBox="0 0 14.5 14.5"><rect x="0" y="0" width="14.5" height="14.5" rx="1.8" fill="#3f3f3f"/><path d="M4 4 L10.5 10.5 M10.5 4 L4 10.5" stroke="#f0f0f0" stroke-width="2"/></svg>
<svg class="r" style="left:3.60px;top:38.80px;" width="13.5" height="13.5" viewBox="0 0 13.5 13.5"><path d="M0.6 0 H11.8 L7.8 5.4 V9.2 L5.2 11 V5.4 Z" fill="#f6d37a"/><rect x="0" y="3.2" width="4.6" height="1.8" fill="#dcd0f0" opacity="0.9"/><rect x="0" y="5.8" width="4.6" height="1.8" fill="#dcd0f0" opacity="0.9"/><rect x="0" y="8.4" width="4.6" height="1.8" fill="#dcd0f0" opacity="0.9"/><path d="M7.6 10 H13.2 L10.4 13.3 Z" fill="#6a6a6a"/></svg>
<svg class="r" style="left:156.60px;top:38.80px;" width="13.5" height="13.5" viewBox="0 0 13.5 13.5"><path d="M0.6 0 H11.8 L7.8 5.4 V9.2 L5.2 11 V5.4 Z" fill="#f6d37a"/><path d="M0.8 9.6 V5.4 H4" fill="none" stroke="#3aa0a0" stroke-width="1.5"/><path d="M7.6 10 H13.2 L10.4 13.3 Z" fill="#6a6a6a"/></svg>
<div class="r " style="left:501.00px;top:180.50px;width:436.00px;height:352.50px;background:#f0f0f0;border:1px solid #c2c2c2;box-shadow:0 0 0 0.5px #e2e2e2;"></div>
<div class="r " style="left:502.00px;top:181.50px;width:434.00px;height:27.50px;background:#fff;"></div>
<svg class="r" style="left:509.50px;top:187.75px;" width="13.5" height="13.5" viewBox="0 0 14 14"><circle cx="7" cy="7" r="6.7" fill="#c9c9c9"/><path d="M0.3 7.6 A6.7 6.7 0 0 1 13.7 7.6 Z" fill="#5fa03a"/><circle cx="7" cy="7" r="4.7" fill="#fbfcfa"/><text x="7" y="9.4" font-size="6.6" font-weight="700" text-anchor="middle" fill="#2f5a1e" font-family="Liberation Sans, sans-serif" letter-spacing="-0.3">HS</text></svg>
<span class="t" style="left:528.50px;top:186.90px;font-size:10.8px;line-height:16px;letter-spacing:-0.107px;color:#9a9a9a;">User manager - fit</span>
<div class="r " style="left:834.50px;top:194.30px;width:9.00px;height:1.00px;background:#e6e6e6;"></div>
<svg class="r" style="left:870.50px;top:189.50px;" width="8.5" height="9" viewBox="0 0 8.5 9"><rect x="0.5" y="0.5" width="7.5" height="8" fill="none" stroke="#b4b4b4" stroke-width="1"/></svg>
<svg class="r" style="left:911.50px;top:189.50px;" width="9" height="9" viewBox="0 0 9 9"><path d="M0.5 0.5 L8.5 8.5 M8.5 0.5 L0.5 8.5" stroke="#a8a8a8" stroke-width="1"/></svg>
<span class="t" style="left:512.00px;top:217.70px;font-size:10.4px;line-height:16px;letter-spacing:-0.037px;color:#111;">Select user account:</span>
<div class="r " style="left:512.00px;top:231.30px;width:5.50px;height:0.90px;background:#222;"></div>
<svg class="r" style="left:512.00px;top:237.50px;" width="14" height="14" viewBox="0 0 14 14"><circle cx="7" cy="7" r="6.8" fill="#43a047"/><path d="M7 3.4 V10.6 M3.4 7 H10.6" stroke="#e8f5e9" stroke-width="2.2"/></svg>
<span class="t" style="left:530.00px;top:236.80px;font-size:10.4px;line-height:16px;letter-spacing:0.332px;color:#111;">Add</span>
<svg class="r" style="left:566.00px;top:237.50px;" width="13" height="14" viewBox="0 0 13 14"><path d="M0 0 H6 L8.3 2.3 V9.5 H0 Z" fill="#1f7ad1"/><path d="M4.6 4.6 H10.4 L12.8 7 V14 H4.6 Z" fill="#49a8ef"/><rect x="6.4" y="8.6" width="4.3" height="0.9" fill="#c8e6fb"/><rect x="6.4" y="11" width="4.3" height="0.9" fill="#c8e6fb"/></svg>
<span class="t" style="left:584.00px;top:236.80px;font-size:10.4px;line-height:16px;letter-spacing:0.165px;color:#111;">Clone</span>
<div class="r " style="left:510.00px;top:256.00px;width:312.00px;height:240.00px;background:#fff;border-bottom:1px solid #9c9c9c;"></div>
<div class="r " style="left:510.00px;top:276.00px;width:87.00px;height:219.00px;background:#f2f2f2;"></div>
<div class="r " style="left:597.00px;top:257.00px;width:1.00px;height:19.00px;background:#e5e5e5;"></div>
<span class="t" style="left:516.50px;top:257.90px;font-size:10.4px;line-height:16px;letter-spacing:-0.059px;color:#111;">Username</span>
<svg class="r" style="left:570.50px;top:263.00px;" width="8" height="5" viewBox="0 0 8 5"><path d="M0.5 4.5 L4 1 L7.5 4.5" fill="none" stroke="#555" stroke-width="1"/></svg>
<span class="t" style="left:603.00px;top:257.90px;font-size:10.4px;line-height:16px;letter-spacing:0.353px;color:#111;">Ho</span>
<svg class="r" style="left:517.80px;top:278.10px;" width="11.5" height="14.5" viewBox="0 0 11.5 14.5"><path d="M0 14.5 C0 10.6 1.6 9.4 5.75 9.4 C9.9 9.4 11.5 10.6 11.5 14.5 Z" fill="#2aa7df"/><path d="M4 9.3 L5.75 11.6 L7.5 9.3 Z" fill="#f3c08c"/><ellipse cx="5.75" cy="5.4" rx="3.3" ry="3.9" fill="#f3c08c"/><path d="M2.2 5 C1.8 -0.6 9.7 -0.6 9.3 5 C8.6 3.4 7.4 3 5.75 3 C4.1 3 2.9 3.4 2.2 5 Z" fill="#6b4423"/></svg>
<span class="t" style="left:536.50px;top:278.40px;font-size:10.4px;line-height:16px;letter-spacing:-0.256px;color:#111;">edc</span>
<span class="t" style="left:606.50px;top:278.40px;font-size:10.4px;line-height:16px;letter-spacing:0.453px;color:#111;">lo</span>
<div class="r " style="left:510.00px;top:296.06px;width:312.00px;height:19.60px;background:#d9d9d9;"></div>
<svg class="r" style="left:517.80px;top:297.86px;" width="11.5" height="14.5" viewBox="0 0 11.5 14.5"><path d="M0 14.5 C0 10.6 1.6 9.4 5.75 9.4 C9.9 9.4 11.5 10.6 11.5 14.5 Z" fill="#2aa7df"/><path d="M4 9.3 L5.75 11.6 L7.5 9.3 Z" fill="#f3c08c"/><ellipse cx="5.75" cy="5.4" rx="3.3" ry="3.9" fill="#f3c08c"/><path d="M2.2 5 C1.8 -0.6 9.7 -0.6 9.3 5 C8.6 3.4 7.4 3 5.75 3 C4.1 3 2.9 3.4 2.2 5 Z" fill="#6b4423"/></svg>
<span class="t" style="left:536.50px;top:298.16px;font-size:10.4px;line-height:16px;letter-spacing:0.470px;color:#111;">fit</span>
<span class="t" style="left:606.50px;top:298.16px;font-size:10.4px;line-height:16px;letter-spacing:0.453px;color:#111;">lo</span>
<svg class="r" style="left:517.80px;top:317.62px;" width="11.5" height="14.5" viewBox="0 0 11.5 14.5"><path d="M0 14.5 C0 10.6 1.6 9.4 5.75 9.4 C9.9 9.4 11.5 10.6 11.5 14.5 Z" fill="#2aa7df"/><path d="M4 9.3 L5.75 11.6 L7.5 9.3 Z" fill="#f3c08c"/><ellipse cx="5.75" cy="5.4" rx="3.3" ry="3.9" fill="#f3c08c"/><path d="M2.2 5 C1.8 -0.6 9.7 -0.6 9.3 5 C8.6 3.4 7.4 3 5.75 3 C4.1 3 2.9 3.4 2.2 5 Z" fill="#6b4423"/></svg>
<span class="t" style="left:536.50px;top:317.92px;font-size:10.4px;line-height:16px;letter-spacing:0.150px;color:#111;">mysql.inf...</span>
<span class="t" style="left:606.50px;top:317.92px;font-size:10.4px;line-height:16px;letter-spacing:0.453px;color:#111;">lo</span>
<svg class="r" style="left:517.80px;top:337.38px;" width="11.5" height="14.5" viewBox="0 0 11.5 14.5"><path d="M0 14.5 C0 10.6 1.6 9.4 5.75 9.4 C9.9 9.4 11.5 10.6 11.5 14.5 Z" fill="#2aa7df"/><path d="M4 9.3 L5.75 11.6 L7.5 9.3 Z" fill="#f3c08c"/><ellipse cx="5.75" cy="5.4" rx="3.3" ry="3.9" fill="#f3c08c"/><path d="M2.2 5 C1.8 -0.6 9.7 -0.6 9.3 5 C8.6 3.4 7.4 3 5.75 3 C4.1 3 2.9 3.4 2.2 5 Z" fill="#6b4423"/></svg>
<span class="t" style="left:536.50px;top:337.68px;font-size:10.4px;line-height:16px;letter-spacing:-0.158px;color:#111;">mysql.ses...</span>
<span class="t" style="left:606.50px;top:337.68px;font-size:10.4px;line-height:16px;letter-spacing:0.453px;color:#111;">lo</span>
<svg class="r" style="left:517.80px;top:357.14px;" width="11.5" height="14.5" viewBox="0 0 11.5 14.5"><path d="M0 14.5 C0 10.6 1.6 9.4 5.75 9.4 C9.9 9.4 11.5 10.6 11.5 14.5 Z" fill="#2aa7df"/><path d="M4 9.3 L5.75 11.6 L7.5 9.3 Z" fill="#f3c08c"/><ellipse cx="5.75" cy="5.4" rx="3.3" ry="3.9" fill="#f3c08c"/><path d="M2.2 5 C1.8 -0.6 9.7 -0.6 9.3 5 C8.6 3.4 7.4 3 5.75 3 C4.1 3 2.9 3.4 2.2 5 Z" fill="#6b4423"/></svg>
<span class="t" style="left:536.50px;top:357.44px;font-size:10.4px;line-height:16px;letter-spacing:-0.072px;color:#111;">mysql.sys</span>
<span class="t" style="left:606.50px;top:357.44px;font-size:10.4px;line-height:16px;letter-spacing:0.453px;color:#111;">lo</span>
<svg class="r" style="left:517.80px;top:376.90px;" width="11.5" height="14.5" viewBox="0 0 11.5 14.5"><path d="M0 14.5 C0 10.6 1.6 9.4 5.75 9.4 C9.9 9.4 11.5 10.6 11.5 14.5 Z" fill="#2aa7df"/><path d="M4 9.3 L5.75 11.6 L7.5 9.3 Z" fill="#f3c08c"/><ellipse cx="5.75" cy="5.4" rx="3.3" ry="3.9" fill="#f3c08c"/><path d="M2.2 5 C1.8 -0.6 9.7 -0.6 9.3 5 C8.6 3.4 7.4 3 5.75 3 C4.1 3 2.9 3.4 2.2 5 Z" fill="#6b4423"/></svg>
<span class="t" style="left:536.50px;top:377.20px;font-size:10.4px;line-height:16px;letter-spacing:0.145px;color:#111;">root</span>
<span class="t" style="left:606.50px;top:377.20px;font-size:10.4px;line-height:16px;letter-spacing:0.453px;color:#111;">lo</span>
<div class="r " style="left:826.00px;top:217.00px;width:45.00px;height:19.00px;background:#f6f6f6;border:1px solid #e3e3e3;border-bottom:none;"></div>
<span class="t" style="left:823.40px;top:219.70px;font-size:10.4px;line-height:16px;letter-spacing:0.186px;color:#111;">L options</span>
<div class="r " style="left:826.00px;top:236.00px;width:101.50px;height:108.50px;background:#f7f7f7;border:1px solid #e6e6e6;"></div>
<div class="r " style="left:840.00px;top:245.60px;width:81.80px;height:19.50px;background:#fff;border-bottom:1.2px solid #8a8a8a;"></div>
<span class="t" style="left:842.50px;top:247.30px;font-size:10.4px;line-height:16px;letter-spacing:0.470px;color:#111;">fit</span>
<div class="r " style="left:840.00px;top:269.50px;width:81.80px;height:20.00px;background:#fff;border-bottom:1.2px solid #8a8a8a;"></div>
<span class="t" style="left:842.50px;top:271.50px;font-size:10.4px;line-height:16px;letter-spacing:0.161px;color:#111;">localhost</span>
<svg class="r" style="left:907.50px;top:276.00px;" width="12.5" height="7.5" viewBox="0 0 12.5 7.5"><path d="M0 0 H12.5 L6.25 7.5 Z" fill="#2f8fe6"/></svg>
<div class="r " style="left:840.00px;top:294.50px;width:81.80px;height:19.00px;background:#fff;border-bottom:1.2px solid #8a8a8a;"></div>
<svg class="r" style="left:907.50px;top:300.00px;" width="12.5" height="7.5" viewBox="0 0 12.5 7.5"><path d="M0 0 H12.5 L6.25 7.5 Z" fill="#2f8fe6"/></svg>
<div class="r " style="left:840.00px;top:318.70px;width:81.80px;height:19.50px;background:#fff;border-bottom:1.2px solid #8a8a8a;"></div>
<svg class="r" style="left:855.50px;top:348.50px;" width="14" height="14" viewBox="0 0 14 14"><circle cx="7" cy="7" r="6.8" fill="#43a047"/><path d="M7 3.4 V10.6 M3.4 7 H10.6" stroke="#e8f5e9" stroke-width="2.2"/></svg>
<span class="t" style="left:874.00px;top:347.60px;font-size:10.4px;line-height:16px;letter-spacing:0.235px;color:#111;">Add object</span>
<div class="r " style="left:826.00px;top:366.70px;width:102.00px;height:129.50px;background:#fff;border-bottom:1px solid #9c9c9c;"></div>
<div class="r " style="left:662.00px;top:504.00px;width:83.50px;height:19.50px;background:#f6f6f6;border:1px solid #ececec;border-radius:2px;"></div>
<svg class="r" style="left:666.50px;top:506.50px;" width="13" height="12.5" viewBox="0 0 13 12.5"><path d="M0.6 0.6 H10 L12.4 3 V11.9 H0.6 Z" fill="#fafafa" stroke="#c4c4c4" stroke-width="1.2"/><rect x="2.8" y="0.6" width="6.2" height="4" fill="#c4c4c4"/></svg>
<span class="t" style="left:701.30px;top:506.50px;font-size:10.4px;line-height:16px;letter-spacing:-0.551px;color:#a6a6a6;">Save</span>
<div class="r " style="left:754.50px;top:504.00px;width:81.00px;height:19.50px;background:#f6f6f6;border:1px solid #ececec;border-radius:2px;"></div>
<svg class="r" style="left:758.00px;top:508.00px;" width="11" height="10.5" viewBox="0 0 11 10.5"><path d="M0 3.6 L4.4 0 V2.4 C8 2.4 10.8 4 10.8 7.2 C10.8 8.8 10 9.9 8.8 10.4 C9.2 8 7.6 5.2 4.4 5.2 V7.6 Z" fill="#d2d2d2"/></svg>
<span class="t" style="left:785.60px;top:506.50px;font-size:10.4px;line-height:16px;letter-spacing:-0.108px;color:#a6a6a6;">Discard</span>
<div class="r " style="left:845.00px;top:504.80px;width:82.80px;height:18.80px;background:#fdfdfd;border:1px solid #dcdcdc;border-radius:2px;"></div>
<svg class="r" style="left:847.50px;top:507.50px;" width="12.5" height="13" viewBox="0 0 12.5 13"><path d="M1 1 L11.5 12 M11.5 1 L1 12" stroke="#e5392f" stroke-width="2"/></svg>
<span class="t" style="left:880.50px;top:506.50px;font-size:10.4px;line-height:16px;letter-spacing:-0.018px;color:#111;">Close</span>
<div class="r " style="left:933.00px;top:523.00px;width:1.60px;height:1.60px;background:#bbbbbb;"></div>
<div class="r " style="left:930.00px;top:526.00px;width:1.60px;height:1.60px;background:#bbbbbb;"></div>
<div class="r " style="left:933.00px;top:526.00px;width:1.60px;height:1.60px;background:#bbbbbb;"></div>
<div class="r " style="left:927.00px;top:529.00px;width:1.60px;height:1.60px;background:#bbbbbb;"></div>
<div class="r " style="left:930.00px;top:529.00px;width:1.60px;height:1.60px;background:#bbbbbb;"></div>
<div class="r " style="left:933.00px;top:529.00px;width:1.60px;height:1.60px;background:#bbbbbb;"></div>
<div class="r " style="left:613.00px;top:203.20px;width:211.50px;height:307.30px;background:#f0f0f0;border:1px solid #5a5a5a;"></div>
<div class="r " style="left:614.00px;top:204.20px;width:209.50px;height:26.50px;background:#fff;"></div>
<svg class="r" style="left:622.00px;top:209.95px;" width="13.5" height="13.5" viewBox="0 0 14 14"><circle cx="7" cy="7" r="6.7" fill="#c9c9c9"/><path d="M0.3 7.6 A6.7 6.7 0 0 1 13.7 7.6 Z" fill="#5fa03a"/><circle cx="7" cy="7" r="4.7" fill="#fbfcfa"/><text x="7" y="9.4" font-size="6.6" font-weight="700" text-anchor="middle" fill="#2f5a1e" font-family="Liberation Sans, sans-serif" letter-spacing="-0.3">HS</text></svg>
<span class="t" style="left:640.50px;top:209.90px;font-size:10.8px;line-height:16px;letter-spacing:-0.288px;color:#111;">Select data...</span>
<div class="r " style="left:717.00px;top:216.50px;width:9.50px;height:1.10px;background:#222;"></div>
<svg class="r" style="left:757.50px;top:212.00px;" width="9.5" height="9" viewBox="0 0 9.5 9"><rect x="0.55" y="0.55" width="8.4" height="7.9" fill="none" stroke="#222" stroke-width="1.1"/></svg>
<svg class="r" style="left:799.00px;top:212.00px;" width="9.5" height="9.5" viewBox="0 0 9.5 9.5"><path d="M0.5 0.5 L9 9 M9 0.5 L0.5 9" stroke="#222" stroke-width="1.1"/></svg>
<span class="t" style="left:621.50px;top:238.20px;font-size:10.4px;line-height:16px;letter-spacing:0.050px;color:#111;">Select database, table or column:</span>
<div class="r " style="left:621.50px;top:256.00px;width:194.50px;height:179.50px;background:#fff;border-bottom:1px solid #9c9c9c;"></div>
<div class="r " style="left:801.00px;top:256.00px;width:15.00px;height:178.50px;background:#f1f1f1;"></div>
<div class="r " style="left:807.00px;top:272.50px;width:2.00px;height:72.50px;background:#6e6e6e;"></div>
<div class="r" style="left:621.5px;top:256px;width:179.5px;height:178.5px;overflow:hidden">
<svg class="r" style="left:6.50px;top:8.10px;" width="9" height="6" viewBox="0 0 9 6"><path d="M0.8 1.2 L4.5 4.8 L8.2 1.2" fill="none" stroke="#222" stroke-width="1.5"/></svg>
<svg class="r" style="left:18.90px;top:4.83px;" width="13.3" height="12.35" viewBox="0 0 14 13"><path d="M0.4 0.9 C3.2 0.2 5.6 1.4 7 3.6 C8.6 6.2 9.6 8.6 13.4 10.8 L11.2 10.6 L12 12.6 C9 11.4 7.2 10.6 5.2 8.6 C3.4 6.8 2.6 4.4 2.4 2.2 Z M2.4 2.2 L0.4 0.9 M3.6 5.4 C4 7 4.6 7.8 5.2 8.6" fill="#f4fbfc" stroke="#a6c6cf" stroke-width="0.9" stroke-linejoin="round"/></svg>
<span class="t" style="left:38.80px;top:2.70px;font-size:10.4px;line-height:16px;letter-spacing:-0.095px;color:#111;">Laragon.MySQL</span>
<svg class="r" style="left:22.50px;top:26.59px;" width="6" height="8.5" viewBox="0 0 6 8.5"><path d="M1.4 1 L4.7 4.25 L1.4 7.5" fill="none" stroke="#787878" stroke-width="1.5"/></svg>
<svg class="r" style="left:34.10px;top:24.24px;opacity:1;" width="12.4" height="13.4" viewBox="0 0 13 14.4"><rect x="0" y="0" width="13" height="3.1" fill="#e7e1f4"/><rect x="0" y="3.6" width="13" height="3.1" fill="#e7e1f4"/><rect x="0" y="7.2" width="13" height="3.1" fill="#e7e1f4"/><rect x="0" y="10.8" width="13" height="3.1" fill="#e7e1f4"/></svg>
<span class="t" style="left:54.00px;top:23.14px;font-size:10.4px;line-height:16px;letter-spacing:0.157px;color:#111;">ademy</span>
<svg class="r" style="left:22.50px;top:46.33px;" width="6" height="8.5" viewBox="0 0 6 8.5"><path d="M1.4 1 L4.7 4.25 L1.4 7.5" fill="none" stroke="#787878" stroke-width="1.5"/></svg>
<svg class="r" style="left:34.10px;top:43.98px;opacity:1;" width="12.4" height="13.4" viewBox="0 0 13 14.4"><rect x="0" y="0" width="13" height="3.1" fill="#e7e1f4"/><rect x="0" y="3.6" width="13" height="3.1" fill="#e7e1f4"/><rect x="0" y="7.2" width="13" height="3.1" fill="#e7e1f4"/><rect x="0" y="10.8" width="13" height="3.1" fill="#e7e1f4"/></svg>
<span class="t" style="left:54.00px;top:42.88px;font-size:10.4px;line-height:16px;letter-spacing:-0.112px;color:#111;">ademy_6</span>
<svg class="r" style="left:22.50px;top:66.07px;" width="6" height="8.5" viewBox="0 0 6 8.5"><path d="M1.4 1 L4.7 4.25 L1.4 7.5" fill="none" stroke="#787878" stroke-width="1.5"/></svg>
<svg class="r" style="left:34.10px;top:63.72px;opacity:1;" width="12.4" height="13.4" viewBox="0 0 13 14.4"><rect x="0" y="0" width="13" height="3.1" fill="#e7e1f4"/><rect x="0" y="3.6" width="13" height="3.1" fill="#e7e1f4"/><rect x="0" y="7.2" width="13" height="3.1" fill="#e7e1f4"/><rect x="0" y="10.8" width="13" height="3.1" fill="#e7e1f4"/></svg>
<span class="t" style="left:54.00px;top:62.62px;font-size:10.4px;line-height:16px;letter-spacing:-0.112px;color:#111;">ademy_7</span>
<svg class="r" style="left:22.50px;top:85.81px;" width="6" height="8.5" viewBox="0 0 6 8.5"><path d="M1.4 1 L4.7 4.25 L1.4 7.5" fill="none" stroke="#787878" stroke-width="1.5"/></svg>
<svg class="r" style="left:34.10px;top:83.46px;opacity:1;" width="12.4" height="13.4" viewBox="0 0 13 14.4"><rect x="0" y="0" width="13" height="3.1" fill="#e7e1f4"/><rect x="0" y="3.6" width="13" height="3.1" fill="#e7e1f4"/><rect x="0" y="7.2" width="13" height="3.1" fill="#e7e1f4"/><rect x="0" y="10.8" width="13" height="3.1" fill="#e7e1f4"/></svg>
<span class="t" style="left:54.00px;top:82.36px;font-size:10.4px;line-height:16px;letter-spacing:-0.112px;color:#111;">ademy_8</span>
<svg class="r" style="left:22.50px;top:105.55px;" width="6" height="8.5" viewBox="0 0 6 8.5"><path d="M1.4 1 L4.7 4.25 L1.4 7.5" fill="none" stroke="#787878" stroke-width="1.5"/></svg>
<svg class="r" style="left:34.10px;top:103.20px;opacity:1;" width="12.4" height="13.4" viewBox="0 0 13 14.4"><rect x="0" y="0" width="13" height="3.1" fill="#e7e1f4"/><rect x="0" y="3.6" width="13" height="3.1" fill="#e7e1f4"/><rect x="0" y="7.2" width="13" height="3.1" fill="#e7e1f4"/><rect x="0" y="10.8" width="13" height="3.1" fill="#e7e1f4"/></svg>
<span class="t" style="left:54.00px;top:102.10px;font-size:10.4px;line-height:16px;letter-spacing:-0.112px;color:#111;">ademy_9</span>
<svg class="r" style="left:22.50px;top:125.29px;" width="6" height="8.5" viewBox="0 0 6 8.5"><path d="M1.4 1 L4.7 4.25 L1.4 7.5" fill="none" stroke="#787878" stroke-width="1.5"/></svg>
<svg class="r" style="left:34.10px;top:122.94px;opacity:1;" width="12.4" height="13.4" viewBox="0 0 13 14.4"><rect x="0" y="0" width="13" height="3.1" fill="#e7e1f4"/><rect x="0" y="3.6" width="13" height="3.1" fill="#e7e1f4"/><rect x="0" y="7.2" width="13" height="3.1" fill="#e7e1f4"/><rect x="0" y="10.8" width="13" height="3.1" fill="#e7e1f4"/></svg>
<span class="t" style="left:54.00px;top:121.84px;font-size:10.4px;line-height:16px;letter-spacing:0.331px;color:#111;">brandford</span>
<div class="r " style="left:1.50px;top:139.38px;width:177.00px;height:19.80px;background:#a3d3fd;border-radius:2px;"></div>
<svg class="r" style="left:22.50px;top:145.03px;" width="6" height="8.5" viewBox="0 0 6 8.5"><path d="M1.4 1 L4.7 4.25 L1.4 7.5" fill="none" stroke="#5f7f9c" stroke-width="1.5"/></svg>
<svg class="r" style="left:34.10px;top:142.68px;opacity:1;" width="12.4" height="13.4" viewBox="0 0 13 14.4"><rect x="0" y="0" width="13" height="3.1" fill="#d6c6ee"/><rect x="0" y="3.6" width="13" height="3.1" fill="#d6c6ee"/><rect x="0" y="7.2" width="13" height="3.1" fill="#d6c6ee"/><rect x="0" y="10.8" width="13" height="3.1" fill="#d6c6ee"/></svg>
<svg class="r" style="left:38.10px;top:147.08px;" width="9" height="9" viewBox="0 0 9 9"><circle cx="4.5" cy="4.5" r="4.2" fill="#c6ecd0"/><path d="M2.2 4.7 L3.9 6.3 L6.8 2.9" fill="none" stroke="#3aa845" stroke-width="1.3"/></svg>
<span class="t" style="left:54.00px;top:141.58px;font-size:10.4px;line-height:16px;letter-spacing:-0.085px;font-weight:700;">diem_ren_luyen</span>
<svg class="r" style="left:22.50px;top:164.77px;" width="6" height="8.5" viewBox="0 0 6 8.5"><path d="M1.4 1 L4.7 4.25 L1.4 7.5" fill="none" stroke="#787878" stroke-width="1.5"/></svg>
<svg class="r" style="left:34.10px;top:162.42px;opacity:1;" width="12.4" height="13.4" viewBox="0 0 13 14.4"><rect x="0" y="0" width="13" height="3.1" fill="#e7e1f4"/><rect x="0" y="3.6" width="13" height="3.1" fill="#e7e1f4"/><rect x="0" y="7.2" width="13" height="3.1" fill="#e7e1f4"/><rect x="0" y="10.8" width="13" height="3.1" fill="#e7e1f4"/></svg>
<span class="t" style="left:54.00px;top:161.32px;font-size:10.4px;line-height:16px;letter-spacing:0.077px;color:#111;">edc</span>
</div>
<span class="t" style="left:621.50px;top:440.50px;font-size:10.4px;line-height:16px;letter-spacing:0.010px;color:#111;">... or wildcard database (% and _ allowed):</span>
<div class="r " style="left:621.50px;top:456.40px;width:195.50px;height:18.80px;background:#f6f6f6;border-bottom:1.2px solid #6f6f6f;"></div>
<span class="t" style="left:624.50px;top:457.60px;font-size:10.4px;line-height:16px;letter-spacing:0.201px;color:#111;">diem\_ren\_luyen</span>
<div class="r " style="left:678.00px;top:481.00px;width:65.20px;height:21.00px;background:#e0eef9;border:1px solid #3f8ccb;border-radius:3px;"></div>
<span class="t" style="left:703.00px;top:483.70px;font-size:10.4px;line-height:16px;letter-spacing:-0.513px;color:#111;">OK</span>
<div class="r " style="left:750.70px;top:481.00px;width:65.00px;height:21.00px;background:#fdfdfd;border:1px solid #d3d3d3;border-radius:3px;"></div>
<span class="t" style="left:766.60px;top:483.70px;font-size:10.4px;line-height:16px;letter-spacing:-0.062px;color:#111;">Cancel</span>
<div class="r " style="left:819.50px;top:499.50px;width:1.60px;height:1.60px;background:#b0b0b0;"></div>
<div class="r " style="left:816.50px;top:502.50px;width:1.60px;height:1.60px;background:#b0b0b0;"></div>
<div class="r " style="left:819.50px;top:502.50px;width:1.60px;height:1.60px;background:#b0b0b0;"></div>
<div class="r " style="left:813.50px;top:505.50px;width:1.60px;height:1.60px;background:#b0b0b0;"></div>
<div class="r " style="left:816.50px;top:505.50px;width:1.60px;height:1.60px;background:#b0b0b0;"></div>
<div class="r " style="left:819.50px;top:505.50px;width:1.60px;height:1.60px;background:#b0b0b0;"></div>
<div class="r" style="left:0;top:746px;width:1437px;height:16.3px;overflow:hidden">
<svg class="r" style="left:15.00px;top:11.20px;" width="15.5" height="15" viewBox="0 0 15.5 15"><path d="M0 2 L6.6 1 V7 H0 Z M7.6 0.9 L15.5 0 V7 H7.6 Z M0 8 H6.6 V14 L0 13 Z M7.6 8 H15.5 V15 L7.6 14 Z" fill="#0a0a0a"/></svg>
<svg class="r" style="left:63.00px;top:10.50px;" width="11" height="11" viewBox="0 0 11 11"><circle cx="5.5" cy="5.5" r="4.8" fill="none" stroke="#222" stroke-width="1.1"/></svg>
<svg class="r" style="left:101.50px;top:11.60px;" width="15" height="8" viewBox="0 0 15 8"><rect x="0" y="0.8" width="8.6" height="4" fill="#333"/><rect x="0.8" y="0" width="1.4" height="1" fill="#333"/><rect x="6.2" y="0" width="1.4" height="1" fill="#333"/><rect x="2.2" y="2" width="4" height="1" fill="#cfe3ee"/><rect x="9.6" y="0.6" width="1.6" height="4.2" fill="#333"/><path d="M12.6 4.8 L13.6 1.6 L14.6 4.8 Z" fill="#333"/></svg>
<svg class="r" style="left:143.50px;top:6.60px;" width="22" height="12" viewBox="0 0 22 12"><path d="M0.6 7.6 L3.4 5.8 L8.4 7 L14.6 0.9 L16.6 0.2 V12 H0.6 Z" fill="#1a7fc9"/><path d="M15.2 0.6 L17 0 L21.4 2.4 V12 H15.2 Z" fill="#2aa9ee"/><path d="M8.4 7 L15.2 12 H6 L3.4 9.4 Z" fill="#cfe3ee" opacity="0"/></svg>
<svg class="r" style="left:187.50px;top:8.00px;" width="21.5" height="16" viewBox="0 0 21.5 16"><path d="M0 1 Q0 0 1 0 H8 L10.5 2.5 H20.5 Q21.5 2.5 21.5 3.5 V16 H0 Z" fill="#f5b93b"/><rect x="0" y="5" width="21.5" height="11" fill="#fbd366"/></svg>
<svg class="r" style="left:232.00px;top:7.80px;" width="20.5" height="20.5" viewBox="0 0 20.5 20.5"><circle cx="10.25" cy="10.25" r="10.25" fill="#e2473a"/><path d="M10.25 10.25 L20.2 7.6 A10.25 10.25 0 0 1 15.4 19.1 Z" fill="#f5c033"/><circle cx="10.25" cy="10.25" r="4.9" fill="#f4f4f4"/><circle cx="10.25" cy="10.25" r="3.8" fill="#4a8af4"/></svg>
<svg class="r" style="left:276.50px;top:7.40px;" width="20.5" height="14" viewBox="0 0 20.5 14"><circle cx="10.5" cy="7" r="7" fill="#29a7e6"/><circle cx="4.5" cy="10.5" r="4.5" fill="#29a7e6"/><circle cx="16" cy="10.5" r="4.5" fill="#1f8fd8"/></svg>
<svg class="r" style="left:321.50px;top:8.00px;" width="20" height="14" viewBox="0 0 20 14"><rect x="0" y="0" width="20" height="14" fill="#3c8fd8"/><rect x="1.3" y="1.3" width="17.4" height="12" fill="#7cc3f2"/></svg>
<svg class="r" style="left:363.30px;top:7.00px;" width="22" height="16" viewBox="0 0 22 16"><rect x="0" y="0" width="22" height="16" fill="#8fb339"/><rect x="1" y="1" width="20" height="15" fill="#9bbf3d"/><path d="M9 4.5 L13 8.5 L11.5 10 L8 6 Z" fill="#2d3a10"/></svg>
<div class="r " style="left:397.00px;top:0.00px;width:43.50px;height:17.00px;background:#eaf2f8;"></div>
<svg class="r" style="left:408.30px;top:8.00px;" width="19.5" height="19.5" viewBox="0 0 19.5 19.5"><circle cx="9.75" cy="9.75" r="9.75" fill="#5fa03a"/><circle cx="9.75" cy="10.4" r="6.6" fill="#f6f9f3"/><text x="9.75" y="13.4" font-size="8.4" font-weight="700" text-anchor="middle" fill="#2f5a1e" font-family="Liberation Sans, sans-serif">HS</text></svg>
<svg class="r" style="left:1202.00px;top:13.50px;" width="6" height="4" viewBox="0 0 6 4"><path d="M0.5 3.5 L3 1 L5.5 3.5" fill="none" stroke="#222" stroke-width="1"/></svg>
<svg class="r" style="left:1218.00px;top:12.00px;" width="12" height="8" viewBox="0 0 12 8"><rect x="0.8" y="0.8" width="10.4" height="8" rx="2.5" fill="#dfefff" stroke="#2a8bf0" stroke-width="1.5"/></svg>
<svg class="r" style="left:1239.00px;top:11.50px;" width="14" height="8" viewBox="0 0 14 8"><rect x="0.5" y="0.5" width="13" height="9" fill="#fbe9ea" stroke="#e7a5a8" stroke-width="1"/><path d="M3.5 8 V3 L7 6.5 L10.5 3 V8" fill="none" stroke="#d93a3a" stroke-width="1.3"/></svg>
<svg class="r" style="left:1260.00px;top:12.00px;" width="15" height="8" viewBox="0 0 15 8"><rect x="0.6" y="0.6" width="13.8" height="9" fill="none" stroke="#222" stroke-width="1.2"/><rect x="0.6" y="2" width="3" height="7" fill="#222"/></svg>
<svg class="r" style="left:1281.00px;top:12.00px;" width="15" height="8" viewBox="0 0 15 8"><path d="M0 5 H3 L7 1 V12 L3 8 H0 Z" fill="#222"/><path d="M9 3 Q11 6 9 9 M11.5 1.5 Q14.5 6 11.5 10.5" fill="none" stroke="#555" stroke-width="0.9"/></svg>
<span class="t" style="left:1305.00px;top:12.00px;font-size:10.4px;line-height:16px;letter-spacing:-0.846px;color:#222;">ENG</span>
<span class="t" style="left:1342.00px;top:2.00px;font-size:10.8px;line-height:16px;letter-spacing:-0.346px;color:#222;">1:37 PM</span>
<div class="r " style="left:1400.00px;top:11.40px;width:15.00px;height:6.00px;background:#0a0a0a;"></div>
<div class="r " style="left:1403.00px;top:13.40px;width:9.00px;height:1.20px;background:#cfd6e6;"></div>
</div>
<div class="r " style="left:-3.00px;top:1.00px;width:1525.50px;height:762.00px;border:1px solid #e2e2e2;border-radius:0 12px 11px 0;box-shadow:0 0 0 20px #f3f3f3;"></div>
<div class="r " style="left:1390.50px;top:-18.00px;width:38.00px;height:38.00px;background:rgba(255,255,255,0.82);border-radius:50%;box-shadow:0 0 2px rgba(0,0,0,0.10);"></div>
<svg class="r" style="left:1400.00px;top:-8.00px;" width="19.5" height="18" viewBox="0 0 19.5 18"><path d="M0.8 10 V13.5 Q0.8 17.2 4.5 17.2 H7.2 M12.3 17.2 H15 Q18.7 17.2 18.7 13.5 V10 M8 10.3 H11.8" fill="none" stroke="#1763b8" stroke-width="1.6"/></svg>
</body></html>
